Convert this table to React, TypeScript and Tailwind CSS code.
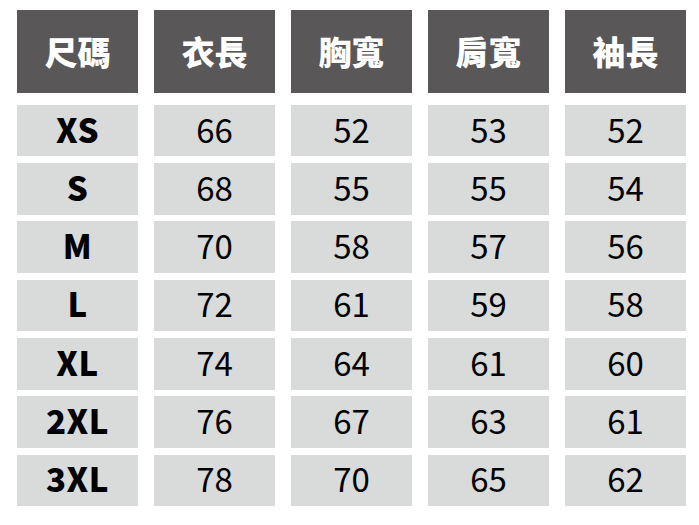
import React from "react";

const headers = ["尺碼", "衣長", "胸寬", "肩寬", "袖長"];
const rows = [
  ["XS", "66", "52", "53", "52"],
  ["S", "68", "55", "55", "54"],
  ["M", "70", "58", "57", "56"],
  ["L", "72", "61", "59", "58"],
  ["XL", "74", "64", "61", "60"],
  ["2XL", "76", "67", "63", "61"],
  ["3XL", "78", "70", "65", "62"],
];

export default function App() {
  return (
    <div
      className="w-[699px] h-[525px] bg-white pl-[17px] pt-[10px]"
      style={{ fontFamily: '"Noto Sans CJK TC", "Noto Sans", sans-serif' }}
    >
      <div className="grid grid-cols-[repeat(5,121px)] gap-x-[16px]">
        {headers.map((h) => (
          <div
            key={h}
            className="h-[83px] bg-[#595757] text-white flex items-center justify-center text-[33px] font-black leading-none pb-[1px]"
          >
            {h}
          </div>
        ))}
      </div>
      <div className="mt-[11.7px] flex flex-col gap-[6.67px]">
        {rows.map((r) => (
          <div key={r[0]} className="grid grid-cols-[repeat(5,121px)] gap-x-[16px]">
            {r.map((c, i) => (
              <div
                key={i}
                className={
                  "h-[51.67px] bg-[#d9dada] text-black flex items-center justify-center text-[33px] leading-none pb-[3px] " +
                  (i === 0 ? "font-black tracking-[0.5px]" : "font-normal")
                }
              >
                {c}
              </div>
            ))}
          </div>
        ))}
      </div>
    </div>
  );
}
